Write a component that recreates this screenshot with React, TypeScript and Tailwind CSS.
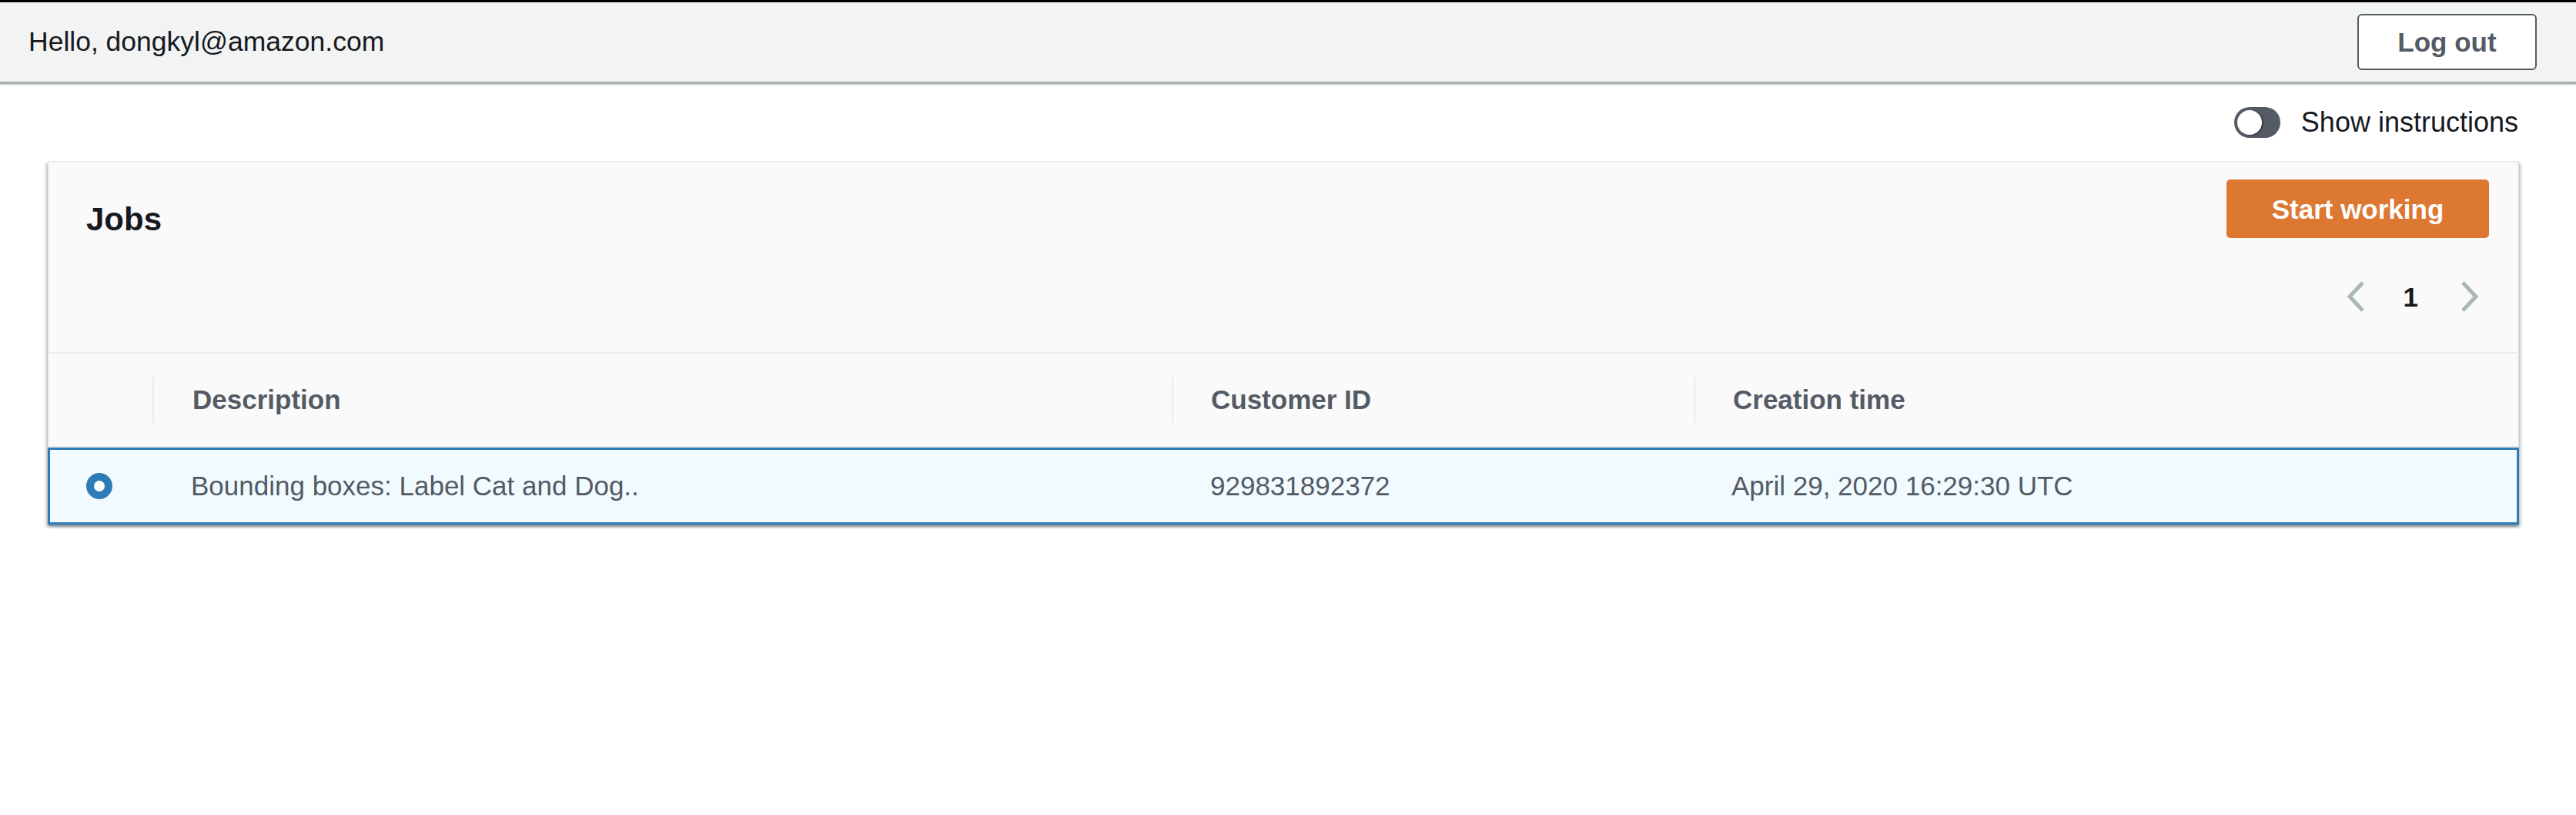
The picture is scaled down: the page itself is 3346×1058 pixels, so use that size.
import { useState } from "react";

const jobs = [
  {
    id: "job-1",
    description: "Bounding boxes: Label Cat and Dog..",
    customerId: "929831892372",
    created: "April 29, 2020 16:29:30 UTC",
  },
];

function Chevron({ dir }: { dir: "left" | "right" }) {
  return (
    <svg width="24" height="40" viewBox="0 0 24 40" fill="none">
      <path
        d={dir === "left" ? "M21 2 L4 20 L21 38" : "M3 2 L20 20 L3 38"}
        stroke="#aab7b8"
        strokeWidth="5"
      />
    </svg>
  );
}

export default function App() {
  const [selected, setSelected] = useState("job-1");
  const [showInstructions, setShowInstructions] = useState(false);

  return (
    <div className="min-h-screen bg-white font-['Liberation_Sans',Arial,sans-serif] text-[#16191f]">
      {/* Top bar */}
      <header className="h-[109px] border-t-[3px] border-b-[3px] border-t-black border-b-[#a6b1b1] bg-[#f2f3f3] pl-[37px] pr-[51px] flex items-center justify-between shadow-[0_1px_2px_rgba(0,28,36,0.25)]">
        <span className="text-[35.5px] leading-none">Hello, dongkyl@amazon.com</span>
        <button className="h-[73px] w-[233px] rounded-[6px] border-2 border-[#545b64] bg-white text-[35px] font-bold text-[#545b64] leading-none">
          Log out
        </button>
      </header>

      {/* Instructions toggle */}
      <div className="mt-[30px] pr-[75px] flex justify-end items-center gap-[27px]">
        <button
          onClick={() => setShowInstructions(!showInstructions)}
          className="w-[60px] h-[40px] rounded-full bg-[#545b64] p-[4px] flex items-center"
        >
          <span
            className={
              showInstructions
                ? "w-[32px] h-[32px] rounded-full bg-white ml-auto shadow-[2px_1px_2px_rgba(0,0,0,0.35)]"
                : "w-[32px] h-[32px] rounded-full bg-white shadow-[2px_1px_2px_rgba(0,0,0,0.35)]"
            }
          />
        </button>
        <span className="text-[36px] leading-none">Show instructions</span>
      </div>

      {/* Jobs panel */}
      <div className="mt-[30px] ml-[62px] mr-[74px] bg-[#fafafa] shadow-[0_3px_3px_0_rgba(0,28,36,0.3),3px_3px_3px_0_rgba(0,28,36,0.15),-3px_3px_3px_0_rgba(0,28,36,0.15)]">
        <div className="h-[250px] border-2 border-[#eaeded] pl-[48px] pr-[37px] flex justify-between">
          <h2 className="pt-[53px] text-[42px] font-bold leading-[42px]">Jobs</h2>
          <div className="pt-[22px] flex flex-col items-end">
            <button className="h-[76px] w-[341px] rounded-[5px] bg-[#dd7833] text-white text-[35px] font-bold leading-none">
              Start working
            </button>
            <div className="mt-[56px] mr-[13px] h-[40px] flex items-center">
              <Chevron dir="left" />
              <span className="ml-[50px] mr-[55px] text-[35px] font-bold leading-none">1</span>
              <Chevron dir="right" />
            </div>
          </div>
        </div>

        <div className="h-[122px] border-x-2 border-b-2 border-[#eaeded] grid grid-cols-[134px_1324px_678px_1fr] items-center text-[35px] font-bold text-[#545b64]">
          <div />
          <div className="h-[60px] border-l-2 border-[#eaeded] pl-[50px] flex items-center">Description</div>
          <div className="h-[60px] border-l-2 border-[#eaeded] pl-[49px] flex items-center">Customer ID</div>
          <div className="h-[60px] border-l-2 border-[#eaeded] pl-[49px] flex items-center">Creation time</div>
        </div>

        {jobs.map((job) => (
          <div
            key={job.id}
            onClick={() => setSelected(job.id)}
            className="h-[100px] border-[3px] border-[#2e7bb6] bg-[#f1faff] grid grid-cols-[133px_1324px_678px_1fr] items-center text-[35px] text-[#545b64]"
          >
            <div className="pl-[47px] flex items-center">
              <span className="w-[34px] h-[34px] rounded-full bg-[#2e7bb6] flex items-center justify-center">
                {selected === job.id && <span className="w-[14px] h-[14px] rounded-full bg-white" />}
              </span>
            </div>
            <div className="pl-[50px]">{job.description}</div>
            <div className="pl-[50px]">{job.customerId}</div>
            <div className="pl-[49px]">{job.created}</div>
          </div>
        ))}
      </div>
    </div>
  );
}
